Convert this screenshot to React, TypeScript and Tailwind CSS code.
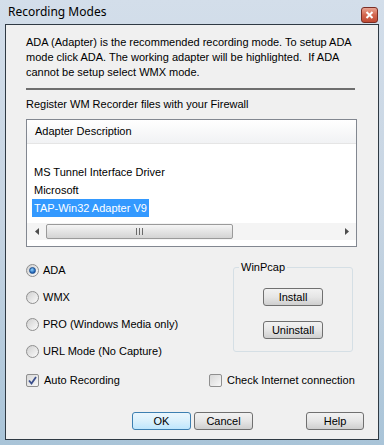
import React from 'react'

function Radio({ checked, label }: { checked?: boolean; label: string }) {
  return (
    <div className="h-[27px] flex items-center">
      <span className="w-[13px] h-[13px] rounded-full border border-[#8f8f8f] bg-gradient-to-br from-[#d0d0d0] to-[#fbfbfb] flex items-center justify-center">
        {checked && (
          <span className="w-[7px] h-[7px] rounded-full bg-[radial-gradient(circle_at_40%_35%,#8fd3ff,#1c5fb3_70%)] border border-[#1d4f8f]" />
        )}
      </span>
      <span className="ml-[4px]">{label}</span>
    </div>
  )
}

function Check({ checked, label }: { checked?: boolean; label: string }) {
  return (
    <div className="flex items-center">
      <span className="w-[13px] h-[13px] border border-[#8f8f8f] rounded-[2px] bg-gradient-to-br from-[#d8d8d8] to-[#f8f8f8] flex items-center justify-center">
        {checked && (
          <svg width="11" height="11" viewBox="0 0 11 11">
            <path d="M2 5.5 L4.5 8.5 L9 2" fill="none" stroke="#3b4f8c" strokeWidth="1.8" />
          </svg>
        )}
      </span>
      <span className="ml-[5px]">{label}</span>
    </div>
  )
}

function Btn({ label, w, def }: { label: string; w: string; def?: boolean }) {
  return (
    <div
      className={`${w} h-[18px] rounded-[3px] border flex items-center justify-center leading-none ${
        def
          ? 'border-[#3c7fb1] bg-gradient-to-b from-[#eaf6fd] via-[#d9f0fc] to-[#bee6fd]'
          : 'border-[#707070] bg-gradient-to-b from-[#f2f2f2] via-[#e6e6e6] to-[#cfcfcf]'
      }`}
    >
      {label}
    </div>
  )
}

export default function App() {
  return (
    <div className="w-[384px] h-[445px] flex flex-col overflow-hidden bg-gradient-to-b from-[#d3deea] via-[#c6d4e2] to-[#a9c4d8] font-['Liberation_Sans',Arial,sans-serif] text-[11px] text-black">
      {/* title bar */}
      <div className="h-[24px] shrink-0 flex items-start justify-between pl-[8px] pr-[6px]">
        <span className="mt-[4px] font-['Noto_Sans',sans-serif] text-[12px] leading-[16px]">Recording Modes</span>
        <div className="mt-[7px] w-[17px] h-[16px] rounded-[3px] border border-[#7a2e25] bg-gradient-to-b from-[#e8a493] via-[#d3664f] to-[#c04a33] flex items-center justify-center">
          <svg width="9" height="8" viewBox="0 0 9 8">
            <path d="M1.5 1 L7.5 7 M7.5 1 L1.5 7" stroke="#fff" strokeWidth="2" />
          </svg>
        </div>
      </div>

      {/* client area */}
      <div className="mx-[5px] mb-[5px] flex-1 border border-[#2f3a44] bg-[#f0f0f0] pl-[20px] flex flex-col">
        <p className="mt-[10px] leading-[15px] whitespace-nowrap">
          ADA (Adapter) is the recommended recording mode. To setup ADA
          <br />
          mode click ADA. The working adapter will be highlighted.&nbsp; If ADA
          <br />
          cannot be setup select WMX mode.
        </p>
        <div className="mt-[8px] w-[329px] h-[2px] bg-[#6e6e6e]" />
        <p className="mt-[7px] leading-[15px]">Register WM Recorder files with your Firewall</p>

        {/* list view */}
        <div className="mt-[7px] w-[331px] h-[128px] border border-[#828790] bg-white flex flex-col">
          <div className="h-[24px] border-b border-[#e5e5e5] bg-gradient-to-b from-white to-[#f1f2f4] pl-[8px] flex items-center">
            Adapter Description
          </div>
          <div className="pt-[1px]">
            <div className="h-[18px]" />
            <div className="h-[18px] flex items-center pl-[7px]">MS Tunnel Interface Driver</div>
            <div className="h-[18px] flex items-center pl-[7px]">Microsoft</div>
            <div className="h-[18px] flex items-center pl-[5px]">
              <span className="bg-[#3399ff] text-white h-[18px] px-[2px] flex items-center">TAP-Win32 Adapter V9</span>
            </div>
          </div>
          {/* horizontal scrollbar */}
          <div className="mt-[6px] h-[17px] flex items-center bg-[#f4f4f4]">
            <div className="w-[19px] flex justify-center">
              <svg width="4" height="7" viewBox="0 0 4 7"><path d="M4 0 L0 3.5 L4 7 Z" fill="#4d4d4d" /></svg>
            </div>
            <div className="w-[187px] h-[15px] rounded-[2px] border border-[#9a9a9a] bg-gradient-to-b from-[#f5f5f5] via-[#e4e4e4] to-[#d4d4d4] flex items-center justify-center">
              <svg width="7" height="7" viewBox="0 0 7 7"><path d="M0.5 0 V7 M3.5 0 V7 M6.5 0 V7" stroke="#6a6a6a" strokeWidth="1" /></svg>
            </div>
            <div className="flex-1" />
            <div className="w-[19px] flex justify-center">
              <svg width="4" height="7" viewBox="0 0 4 7"><path d="M0 0 L4 3.5 L0 7 Z" fill="#4d4d4d" /></svg>
            </div>
          </div>
        </div>

        {/* modes + winpcap */}
        <div className="mt-[10px] flex">
          <div className="w-[207px]">
            <Radio checked label="ADA" />
            <Radio label="WMX" />
            <Radio label="PRO (Windows Media only)" />
            <Radio label="URL Mode (No Capture)" />
          </div>
          <div className="relative mt-[10px] w-[120px] h-[85px] border border-[#d5dfe5] rounded-[3px] flex flex-col items-center">
            <span className="absolute left-[5px] top-[-8px] px-[2px] bg-[#f0f0f0] leading-[15px]">WinPcap</span>
            <div className="mt-[20px]"><Btn label="Install" w="w-[60px]" /></div>
            <div className="mt-[15px]"><Btn label="Uninstall" w="w-[60px]" /></div>
          </div>
        </div>

        {/* checkboxes */}
        <div className="h-[30px] flex items-center">
          <div className="w-[183px]"><Check checked label="Auto Recording" /></div>
          <Check label="Check Internet connection" />
        </div>

        {/* dialog buttons */}
        <div className="mt-[17px] flex pl-[106px]">
          <Btn def label="OK" w="w-[59px]" />
          <div className="ml-[3px]"><Btn label="Cancel" w="w-[59px]" /></div>
          <div className="ml-[53px]"><Btn label="Help" w="w-[58px]" /></div>
        </div>
      </div>
    </div>
  )
}
